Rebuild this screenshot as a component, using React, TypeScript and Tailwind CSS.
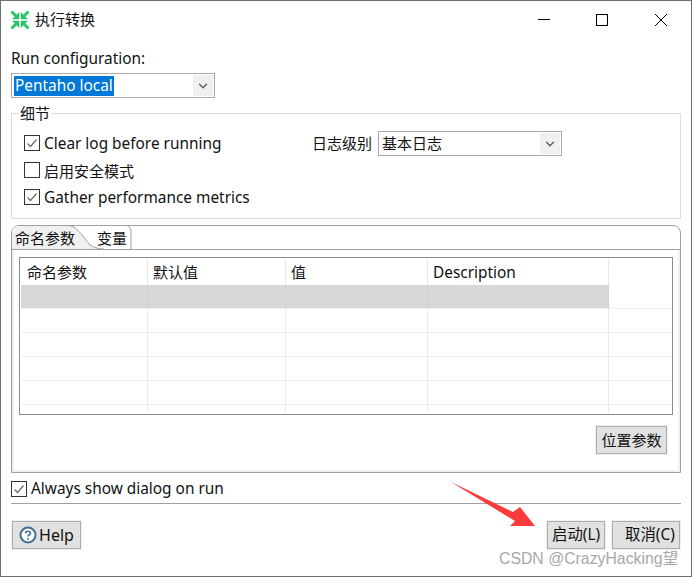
import React from 'react';
import { ChevronDown } from 'lucide-react';

const FONT = "font-['Noto_Sans','Noto_Sans_CJK_SC',sans-serif]";

const Check = ({ checked = false }: { checked?: boolean }) => (
  <span className="flex h-4 w-4 shrink-0 items-center justify-center border border-[#333333] bg-white">
    {checked && (
      <svg width="14" height="14" viewBox="0 0 14 14" fill="none">
        <path d="M2.5 7.5 L5.5 10.5 L11.5 3.5" stroke="#6a6a6a" strokeWidth="1.2" />
      </svg>
    )}
  </span>
);

const CheckRow = ({ label, checked, className = '', labelClass = 'text-[15.4px]' }: { label: string; checked?: boolean; className?: string; labelClass?: string }) => (
  <div className={`flex h-4 items-center gap-1 ${className}`}>
    <Check checked={checked} />
    <span className={`whitespace-nowrap leading-4 text-[#111111] ${labelClass}`}>{label}</span>
  </div>
);

const Combo = ({ children, className = '' }: { children: React.ReactNode; className?: string }) => (
  <div className={`flex items-center justify-between border border-[#a9a9a9] bg-white p-px ${className}`}>
    {children}
    <span className="flex h-full w-5 items-center justify-center bg-[#f0f0f0]">
      <ChevronDown size={14} strokeWidth={2.5} color="#606060" />
    </span>
  </div>
);

const Btn = ({ children, className = '' }: { children: React.ReactNode; className?: string }) => (
  <button className={`flex h-[28px] items-center border border-[#adadad] bg-[#e1e1e1] leading-none text-[#111111] outline outline-1 outline-[#f0f0f0] ${className}`}>
    {children}
  </button>
);

const COLS = [
  { name: '命名参数', w: 'w-[127px]', pl: 'pl-[6px] text-[15px]' },
  { name: '默认值', w: 'w-[138px]', pl: 'pl-[5px] text-[15px]' },
  { name: '值', w: 'w-[142px]', pl: 'pl-[5px] text-[15px]' },
  { name: 'Description', w: 'w-[181px]', pl: 'pl-[5px] text-[15.4px]' },
];

const GridRow = ({ selected = false, last = false }: { selected?: boolean; last?: boolean }) => (
  <div className={`flex ${last ? 'h-[8px]' : 'h-6 border-b border-[#eeeeee]'}`}>
    {COLS.map((c) => (
      <div
        key={c.name}
        className={`${c.w} shrink-0 border-r ${selected ? 'border-[#cbd2d9] bg-[#d7d7d7]' : 'border-[#e4ebf5]'}`}
      />
    ))}
  </div>
);

export default function App() {
  return (
    <div className={`relative flex h-[577px] w-[692px] flex-col overflow-hidden border border-[#6e6e6e] bg-white ${FONT}`}>
      {/* title bar */}
      <div className="flex h-[37px] shrink-0 items-center pl-[9px]">
        <svg width="20" height="20" viewBox="0 0 20 20" className="shrink-0">
          <g fill="#2ec26e" stroke="#2ec26e">
            <path d="M9 9 V2.5 L2.5 9 Z" strokeWidth="0.5" />
            <path d="M6 6 L1.5 1.5" strokeWidth="3" />
            <path d="M11 9 V2.5 L17.5 9 Z" strokeWidth="0.5" />
            <path d="M14 6 L18.5 1.5" strokeWidth="3" />
            <path d="M9 11 V17.5 L2.5 11 Z" strokeWidth="0.5" />
            <path d="M6 14 L1.5 18.5" strokeWidth="3" />
            <path d="M11 11 V17.5 L17.5 11 Z" strokeWidth="0.5" />
            <path d="M14 14 L18.5 18.5" strokeWidth="3" />
          </g>
        </svg>
        <span className="ml-[5px] text-[15px] text-[#111111]">执行转换</span>
        <div className="ml-auto flex items-center">
          <svg width="14" height="14" viewBox="0 0 14 14" className="mr-[44px]"><path d="M1 6.5 H13" stroke="#000" /></svg>
          <svg width="14" height="14" viewBox="0 0 14 14" className="mr-[45px]"><rect x="1.5" y="1.5" width="11" height="11" fill="none" stroke="#000" /></svg>
          <svg width="14" height="14" viewBox="0 0 14 14" className="mr-[23px]"><path d="M1 1 L13 13 M13 1 L1 13" stroke="#000" /></svg>
        </div>
      </div>

      <div className="flex flex-1 flex-col px-[10px]">
        <div className="mt-[11px] text-[15.4px] leading-5 text-[#111111]">Run configuration:</div>
        <Combo className="mt-[4px] h-[25px] w-[204px]">
          <span className="ml-[1px] bg-[#0078d7] px-[1px] text-[15.4px] leading-5 text-white">Pentaho local</span>
        </Combo>

        {/* details group */}
        <div className="relative mt-[15px] h-[106px] w-[670px] border border-[#dcdcdc]">
          <span className="absolute left-[7px] top-[-9px] bg-white px-[1px] text-[15px] leading-4 text-[#111111]">细节</span>
          <div className="flex flex-col gap-[11px] pl-3 pt-[21px]">
            <CheckRow label="Clear log before running" checked labelClass="pt-[2px] text-[15.4px]" />
            <CheckRow label="启用安全模式" labelClass="pt-[2px] text-[15px]" />
            <CheckRow label="Gather performance metrics" checked labelClass="pt-[2px] text-[15.4px]" />
          </div>
          <div className="absolute left-[300px] top-[17px] flex items-center gap-[6px]">
            <span className="whitespace-nowrap text-[15px] text-[#111111]">日志级别</span>
            <Combo className="h-[25px] w-[184px]">
              <span className="ml-[2px] pb-[2px] text-[15px] leading-5 text-[#111111]">基本日志</span>
            </Combo>
          </div>
        </div>

        {/* tab folder */}
        <div className="mt-[6px] flex h-[248px] w-[670px] flex-col rounded-t-[8px] border border-[#a0a0a0]">
          <div className="relative flex h-[24px] shrink-0 border-b border-[#a0a0a0]">
            <svg width="100" height="25" viewBox="0 0 100 25" fill="none" className="absolute left-0 top-[-1px]">
              <path d="M0 24 V7 Q0 1 7 1 H56 C64 1 68 8 78 20 C82 23 88 24 92 24 Z" fill="#f0f0f0" />
              <path d="M56 .5 C64 .5 68 8 78 20 C82 23 88 24 92 24" stroke="#a0a0a0" />
            </svg>
            <svg width="10" height="24" viewBox="0 0 10 24" fill="none" className="absolute left-[112px] top-[-1px]">
              <path d="M0 .5 H2 C5 .5 7 3 7 6 V24" stroke="#a0a0a0" />
            </svg>
            <div className="relative w-[85px] pl-[3px] text-[15px] leading-[25px] text-[#111111]">命名参数</div>
            <div className="relative text-[15px] leading-[25px] text-[#111111]">变量</div>
          </div>
          <div className="flex flex-1 flex-col border-x-[2px] border-b-[2px] border-[#f0f0f0] px-[5px] pt-[7px]">
            <div className="h-[158px] w-[654px] border border-[#8a8a8a] p-px">
              <div className="flex h-[26px] leading-[27px] text-[#111111]">
                {COLS.map((c) => (
                  <div key={c.name} className={`${c.w} ${c.pl} shrink-0 border-r border-[#e8e8e8]`}>{c.name}</div>
                ))}
              </div>
              <GridRow selected />
              <GridRow />
              <GridRow />
              <GridRow />
              <GridRow />
              <GridRow last />
            </div>
            <div className="mt-[11px] flex justify-end pr-[6px]">
              <Btn className="w-[71px] justify-center text-[15px]">位置参数</Btn>
            </div>
          </div>
        </div>

        <CheckRow label="Always show dialog on run" checked className="mt-[8px]" />
        <div className="mt-[6px] h-px w-[670px] bg-[#a0a0a0]" />

        <div className="mt-[17px] flex w-[669px] items-start">
          <Btn className="ml-[1px] w-[69px] justify-center gap-[2px] text-[16px]">
            <svg width="18" height="18" viewBox="0 0 18 18" fill="none">
              <circle cx="9" cy="9" r="7.5" fill="#fff" stroke="#3f6f96" strokeWidth="2" />
              <path d="M6.6 7.2 C6.6 4.6 11.4 4.6 11.4 7.2 C11.4 8.8 9 8.8 9 10.6" stroke="#3f6f96" strokeWidth="1.7" />
              <circle cx="9" cy="13" r="1" fill="#3f6f96" />
            </svg>
            Help
          </Btn>
          <Btn className="ml-auto w-[58px] justify-start pl-[4px] text-[15.4px]">启动(L)</Btn>
          <Btn className="ml-[7px] w-[68px] justify-start pl-[12px] text-[15.4px]">取消(C)</Btn>
        </div>
      </div>

      {/* annotation arrow + watermark */}
      <svg width="100" height="60" viewBox="0 0 100 60" className="absolute left-[448px] top-[480px]">
        <path d="M2 1 L64 31 L71 26 L86 45 L61 45 L66 40 Z" fill="#fb3a3a" />
      </svg>
      <span className="absolute left-[498px] top-[548px] whitespace-nowrap font-['Liberation_Sans','Noto_Sans_CJK_SC',sans-serif] text-[15.8px] leading-5 text-[#a8a8a8]">CSDN @CrazyHacking望</span>
    </div>
  );
}
